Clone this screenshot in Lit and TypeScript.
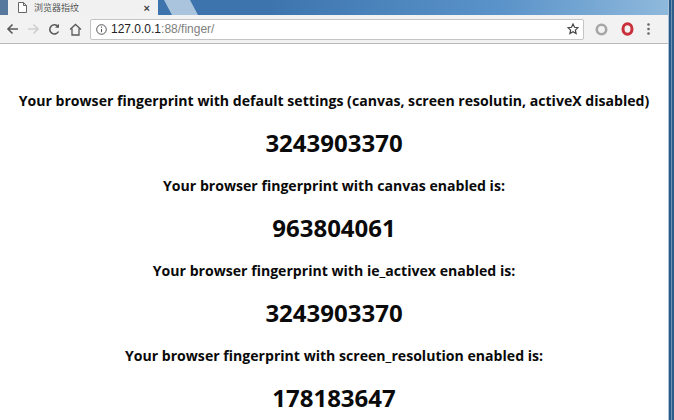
import { LitElement, html, css } from "lit";
import { customElement } from "lit/decorators.js";

@customElement("app-root")
export class AppRoot extends LitElement {
  static styles = css`
    :host { display: block; width: 674px; height: 420px; overflow: hidden; position: relative; background: #2f5c8c; font-family: "Open Sans", "Noto Sans", sans-serif; }
    .frame { display: flex; height: 420px; }
    .win { width: 668px; display: flex; flex-direction: column; flex: none; }
    .edge { flex: 1; background: linear-gradient(90deg, #a9c0d6 0 1px, #2c5a88 1px 3px, #6f92b3 3px 4px, #2f5d8b 4px); }
    .strip { height: 15px; display: flex; background: linear-gradient(90deg, #3f74ab 0%, #3d74ae 40%, #5a93c9 75%, #8fb9dc 100%); overflow: hidden; flex: none; }
    .sliver { width: 8px; flex: none; background: #55789c; }
    .tab { width: 150px; flex: none; background: #f1f1f1; display: flex; align-items: center; padding: 0 0 0 10px; box-sizing: border-box; clip-path: polygon(0 0, 100% 0, 100% 100%, 0 100%); }
    .tabtitle { font: 9px "Noto Sans CJK SC", sans-serif; color: #555; margin-left: 7px; flex: 1; white-space: nowrap; }
    .close { font: 11px "Liberation Sans", sans-serif; color: #444; margin-right: 8px; font-weight: bold; }
    .newtab { width: 26px; height: 15px; flex: none; margin-left: 10px; background: #a9c4dc; transform: skewX(28deg); }
    .toolbar { height: 29px; flex: none; background: #f2f2f2; border-bottom: 1px solid #b9b9b9; display: flex; align-items: center; padding-left: 6px; box-sizing: border-box; }
    .toolbar svg { display: block; flex: none; }
    .nav { display: flex; align-items: center; gap: 8px; }
    .omni { width: 494px; height: 21px; margin-left: 8px; background: #fff; border: 1px solid #c4c4c4; border-radius: 2px; box-sizing: border-box; display: flex; align-items: center; padding: 0 4px 0 5px; flex: none; }
    .url { font: 12px "Liberation Sans", sans-serif; color: #222; margin-left: 4px; flex: 1; }
    .url span { color: #808080; }
    .exts { display: flex; align-items: center; gap: 13px; margin-left: 11px; }
    .page { flex: 1; background: #fff; text-align: center; color: #0a0a0a; padding-top: 47px; overflow: hidden; }
    .label { font-size: 14.1px; font-weight: 700; line-height: 20px; margin: 0; white-space: nowrap; }
    .value { font-size: 24px; font-weight: 700; line-height: 32px; margin: 16px 0 17px; }
  `;

  rows = [
    ["Your browser fingerprint with default settings (canvas, screen resolutin, activeX disabled)", "3243903370"],
    ["Your browser fingerprint with canvas enabled is:", "963804061"],
    ["Your browser fingerprint with ie_activex enabled is:", "3243903370"],
    ["Your browser fingerprint with screen_resolution enabled is:", "178183647"],
  ];

  render() {
    return html`
      <div class="frame">
        <div class="win">
          <div class="strip">
            <div class="sliver"></div>
            <div class="tab">
              <svg width="9" height="11" viewBox="0 0 9 11" fill="#fff" stroke="#666"><path d="M.5.5h5l3 3v7h-8zM5.5.5v3h3"/></svg>
              <span class="tabtitle">浏览器指纹</span>
              <span class="close">×</span>
            </div>
            <div class="newtab"></div>
          </div>
          <div class="toolbar">
            <div class="nav">
              <svg width="13" height="12" viewBox="0 0 13 12" fill="none" stroke="#5a5a5a" stroke-width="1.6"><path d="M12 6H2M6.500 1.500 2 6l4.500 4.500"/></svg>
              <svg width="13" height="12" viewBox="0 0 13 12" fill="none" stroke="#cfcfcf" stroke-width="1.600"><path d="M1 6h10M6.500 1.500 11 6l-4.500 4.500"/></svg>
              <svg width="13" height="13" viewBox="0 0 13 13" fill="none" stroke="#5a5a5a" stroke-width="1.600"><path d="M10.500 8.500A4.600 4.600 0 1 1 10 3.500"/><path d="M11 .8v4H7z" fill="#5a5a5a" stroke="none"/></svg>
              <svg width="13" height="13" viewBox="0 0 13 13" fill="none" stroke="#5a5a5a" stroke-width="1.300"><path d="M1 6.500 6.500 1.500 12 6.500M3 5.500v6.500h7V5.500"/></svg>
            </div>
            <div class="omni">
              <svg width="11" height="11" viewBox="0 0 11 11" fill="none" stroke="#555"><circle cx="5.500" cy="5.500" r="4.800"/><path d="M5.500 5v3.200M5.500 2.500v1.300"/></svg>
              <span class="url">127.0.0.1<span>:88/finger/</span></span>
              <svg width="12" height="12" viewBox="0 0 12 12" fill="none" stroke="#444" stroke-width="1.200"><path d="M6 1l1.500 3.300 3.500.4-2.600 2.400.7 3.500L6 8.800l-3.100 1.800.7-3.500L1 4.700l3.500-.4z"/></svg>
            </div>
            <div class="exts">
              <svg width="13" height="13" viewBox="0 0 13 13" fill="none" stroke="#a6a6a6" stroke-width="2.600"><circle cx="6.500" cy="6.500" r="4.700"/></svg>
              <svg width="13" height="14" viewBox="0 0 13 14" fill="none" stroke="#c9303a" stroke-width="3"><ellipse cx="6.500" cy="7" rx="4.500" ry="5.200"/></svg>
              <svg width="3" height="12" viewBox="0 0 3 12" fill="#666"><circle cx="1.500" cy="1.500" r="1.300"/><circle cx="1.500" cy="6" r="1.300"/><circle cx="1.500" cy="10.500" r="1.300"/></svg>
            </div>
          </div>
          <div class="page">
            ${this.rows.map(([l, v]) => html`<p class="label">${l}</p><p class="value">${v}</p>`)}
          </div>
        </div>
        <div class="edge"></div>
      </div>
    `;
  }
}
